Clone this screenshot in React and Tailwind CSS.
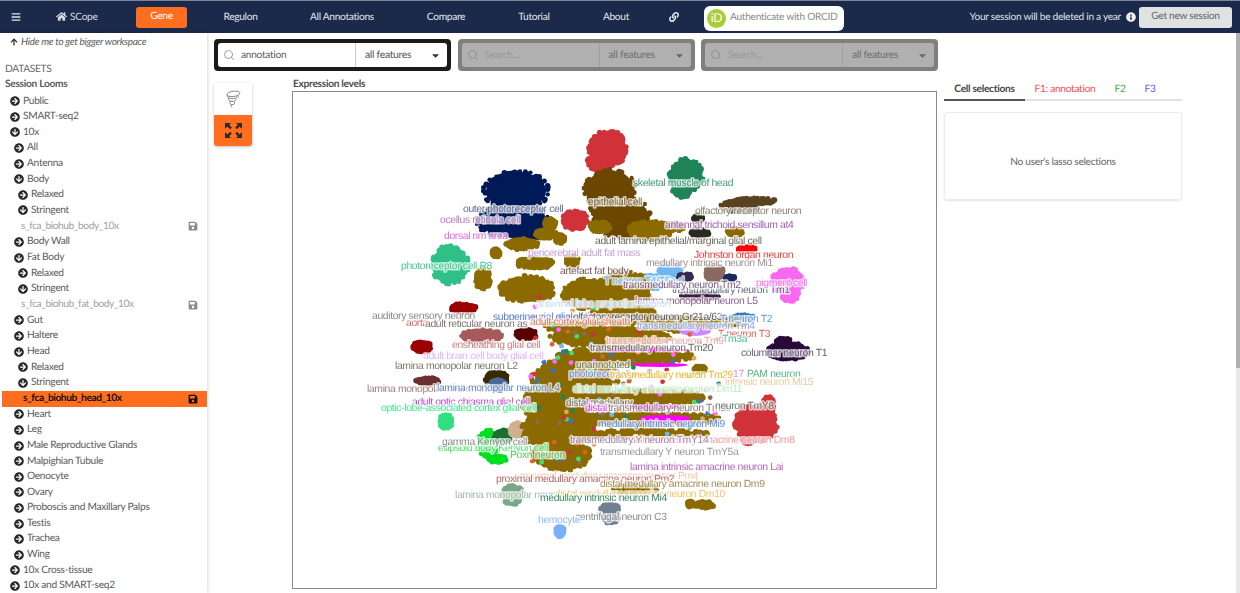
import React from 'react';
import { FaArrowCircleDown, FaArrowCircleRight, FaArrowUp, FaBars, FaCaretDown, FaHome, FaInfoCircle, FaLink, FaSave } from 'react-icons/fa';
import { Search } from 'lucide-react';

const NAV_ITEMS = [
  { label: 'Regulon', width: 'w-[107px]' },
  { label: 'All Annotations', width: 'w-[96px]' },
  { label: 'Compare', width: 'w-[112px]' },
  { label: 'Tutorial', width: 'w-[64px]' },
  { label: 'About', width: 'w-[100px]' },
];

// indent 0/1/2 maps to the tree levels, open = down arrow, file = loom row
const TREE = [
  { label: 'Public', level: 0 },
  { label: 'SMART-seq2', level: 0 },
  { label: '10x', level: 0, open: true },
  { label: 'All', level: 1 },
  { label: 'Antenna', level: 1 },
  { label: 'Body', level: 1, open: true },
  { label: 'Relaxed', level: 2 },
  { label: 'Stringent', level: 2, open: true },
  { label: 's_fca_biohub_body_10x', file: true },
  { label: 'Body Wall', level: 1 },
  { label: 'Fat Body', level: 1, open: true },
  { label: 'Relaxed', level: 2 },
  { label: 'Stringent', level: 2, open: true },
  { label: 's_fca_biohub_fat_body_10x', file: true },
  { label: 'Gut', level: 1 },
  { label: 'Haltere', level: 1 },
  { label: 'Head', level: 1, open: true },
  { label: 'Relaxed', level: 2 },
  { label: 'Stringent', level: 2, open: true },
  { label: 's_fca_biohub_head_10x', file: true, active: true },
  { label: 'Heart', level: 1 },
  { label: 'Leg', level: 1 },
  { label: 'Male Reproductive Glands', level: 1 },
  { label: 'Malpighian Tubule', level: 1 },
  { label: 'Oenocyte', level: 1 },
  { label: 'Ovary', level: 1 },
  { label: 'Proboscis and Maxillary Palps', level: 1 },
  { label: 'Testis', level: 1 },
  { label: 'Trachea', level: 1 },
  { label: 'Wing', level: 1 },
  { label: '10x Cross-tissue', level: 0 },
  { label: '10x and SMART-seq2', level: 0 },
];

const INDENT = ['pl-[10px]', 'pl-[14px]', 'pl-[18px]'];

// clusters: [cx, cy, rx, ry, colour], page coordinates
const OLIVE = '#8b6b00';
const BROWN = '#6b4700';
const CLUSTERS = [
  [608, 150, 18, 17, '#cf3339'], [600, 163, 12, 8, '#cf3339'],
  [516, 192, 30, 19, '#001a57'], [512, 222, 34, 15, '#001a57'], [530, 232, 12, 8, '#001a57'],
  [686, 176, 16, 15, '#1f8558'], [682, 190, 9, 8, '#1f8558'], [575, 221, 12, 9, '#cf3339'],
  [450, 266, 17, 18, '#2fc088'],
  [610, 190, 24, 18, BROWN], [622, 218, 26, 20, BROWN], [608, 205, 18, 18, BROWN],
  [650, 232, 20, 9, OLIVE], [670, 228, 14, 4, OLIVE], [600, 228, 10, 5, OLIVE],
  [740, 207, 18, 6, '#5a4320'], [755, 202, 20, 3, '#5a4320'], [700, 234, 9, 3, '#2b2b20'], [698, 219, 5, 3, '#2b2b20'],
  [735, 233, 8, 4, OLIVE], [747, 250, 9, 3, '#ff0000'],
  [788, 282, 15, 12, '#f968ef'], [790, 296, 8, 6, '#f968ef'],
  [714, 274, 9, 8, '#8a6a60'], [670, 272, 11, 9, '#6fb7f0'], [648, 283, 17, 7, '#6fb7f0'],
  [685, 278, 7, 3, '#3a2a50'], [730, 279, 5, 2, '#1a2a5a'], [700, 297, 18, 3, '#3a2040'],
  [742, 319, 12, 3, '#3b7ab8'], [730, 323, 15, 3, OLIVE],
  [788, 352, 20, 8, '#2a0a3a'], [784, 344, 7, 5, '#2a0a3a'],
  [756, 424, 20, 17, '#cf3339'], [768, 405, 6, 7, '#cf3339'], [748, 440, 6, 5, '#cf3339'],
  [463, 309, 12, 4, '#9a0000'], [422, 348, 9, 5, '#9a0000'],
  [482, 337, 19, 6, '#a65a5a'], [526, 335, 10, 5, '#5a0000'],
  [497, 380, 11, 7, '#3a2a00'], [428, 382, 11, 3, '#6a3030'],
  [498, 386, 8, 5, '#4a6a9a'], [446, 422, 6, 7, '#2fe080'], [488, 444, 9, 13, '#00e020'],
  [497, 460, 9, 3, '#00e020'], [503, 437, 8, 6, '#1a7030'], [517, 431, 7, 7, '#d0b090'],
  [513, 496, 10, 9, '#78a888'], [611, 517, 7, 7, '#708090'], [610, 509, 9, 4, '#708090'],
  [560, 532, 4, 5, '#7ab0ff'], [704, 506, 9, 3, OLIVE], [690, 505, 3, 3, OLIVE],
  [546, 235, 10, 4, OLIVE], [522, 245, 15, 5, OLIVE], [560, 240, 5, 4, OLIVE],
  [535, 264, 18, 5, OLIVE], [483, 280, 7, 10, OLIVE], [496, 254, 4, 4, OLIVE],
  [527, 290, 26, 12, OLIVE], [572, 262, 6, 6, OLIVE], [585, 295, 22, 14, OLIVE],
  [624, 292, 26, 18, OLIVE], [574, 326, 28, 8, OLIVE], [625, 315, 30, 10, OLIVE], [685, 325, 30, 7, OLIVE],
  [610, 338, 55, 10, OLIVE], [625, 357, 62, 8, OLIVE], [575, 378, 40, 18, OLIVE],
  [558, 402, 34, 22, OLIVE], [640, 398, 62, 7, OLIVE], [645, 420, 70, 6, OLIVE],
  [558, 430, 34, 20, OLIVE], [650, 435, 55, 4, OLIVE], [562, 456, 28, 14, OLIVE],
  [635, 490, 20, 4, OLIVE], [550, 225, 6, 5, OLIVE], [700, 370, 6, 3, OLIVE],
];

const STREAKS = [
  [640, 351, 50, 2, '#ff00ff'], [660, 366, 28, 2, '#ff00ff'], [652, 408, 28, 3, '#ff00ff'],
  [665, 420, 26, 4, '#ff00ff'], [695, 332, 16, 5, '#cc88ff'],
];

// scattered points from the minority clusters
const SPECKS = ['#3b6fd8', '#ff66ff', '#e06030', '#f0a060', '#8a6a50', '#3fe070', '#cf3339', '#6fb7f0', '#1f8558'];

function seeded(seed) {
  let s = seed;
  return () => {
    s = (s * 16807) % 2147483647;
    return s / 2147483647;
  };
}

function Cluster({ data, index }) {
  const [cx, cy, rx, ry, color] = data;
  const rnd = seeded(index * 97 + 11);
  const count = Math.max(10, Math.round((rx + ry) * 1.5));
  const dots = [];
  for (let i = 0; i < count; i++) {
    const a = (i / count) * Math.PI * 2;
    const k = 0.85 + rnd() * 0.25;
    dots.push(<circle key={i} cx={cx + Math.cos(a) * rx * k} cy={cy + Math.sin(a) * ry * k} r={2 + rnd()} />);
  }
  return (
    <g fill={color}>
      <ellipse cx={cx} cy={cy} rx={rx} ry={ry} />
      {dots}
    </g>
  );
}

function Specks() {
  const rnd = seeded(4242);
  const dots = [];
  for (let i = 0; i < 130; i++) {
    const left = i % 2 === 0;
    const x = left ? 530 + rnd() * 65 : 590 + rnd() * 130;
    const y = left ? 290 + rnd() * 175 : 325 + rnd() * 110;
    dots.push(<circle key={i} cx={x} cy={y} r={2.4} fill={SPECKS[Math.floor(rnd() * SPECKS.length)]} />);
  }
  return <g>{dots}</g>;
}

// [x, centre y, colour, text]
const LABELS = [
  [463, 210, '#5f6c98', 'outer photoreceptor cell'],
  [440, 221, '#b77dc2', 'ocellus retinula cell'],
  [444, 237, '#e466e4', 'dorsal rim area'],
  [401, 267, '#3fce92', 'photoreceptor cell R8'],
  [633, 184, '#3f9c78', 'skeletal muscle of head'],
  [588, 203, '#7a6638', 'epithelial cell'],
  [695, 212, '#8b8272', 'olfactory receptor neuron'],
  [665, 226, '#9d5db8', 'antennal trichoid sensillum at4'],
  [595, 242, '#6a6a62', 'adult lamina epithelial/marginal glial cell'],
  [694, 256, '#f53a3a', 'Johnston organ neuron'],
  [528, 254, '#c6a2d8', 'pericerebral adult fat mass'],
  [646, 264, '#a39292', 'medullary intrinsic neuron Mi1'],
  [560, 272, '#7c5656', 'artefact fat body'],
  [604, 282, '#70b8f4', 'T neuron T4/T5a-d'],
  [672, 291, '#666a80', 'transmedullary neuron Tm1'],
  [623, 286, '#7c5c84', 'transmedullary neuron Tm2'],
  [756, 284, '#fb6cf2', 'pigment cell'],
  [635, 302, '#8d5f8e', 'lamina monopolar neuron L5'],
  [536, 305, '#c4def8', 'antennal lobe projection neuron'],
  [372, 317, '#8a8a86', 'auditory sensory neuron'],
  [493, 318, '#5b7ad2', 'subperineurial glial cell'],
  [573, 318, '#5c5c64', 'olfactory receptor neuron Gr21a/63a'],
  [720, 320, '#5b9ed8', 'T neuron T2'],
  [406, 324, '#d96a6a', 'aorta'],
  [425, 325, '#7c7470', 'adult reticular neuron as'],
  [530, 323, '#ea7a66', 'adult cortex glial sheath'],
  [637, 327, '#8ca2f2', 'transmedullary neuron Tm4'],
  [718, 335, '#ea5a5a', 'T neuron T3'],
  [722, 340, '#4cc096', 'Tm3a'],
  [606, 342, '#f2a4a4', 'transmedullary neuron Tm9'],
  [590, 349, '#6c6c66', 'transmedullary neuron Tm20'],
  [741, 354, '#6b5c7c', 'columnar neuron T1'],
  [452, 346, '#c87e7e', 'ensheathing glial cell'],
  [423, 357, '#e2b4ff', 'adult brain cell body glial cell'],
  [395, 367, '#787868', 'lamina monopolar neuron L2'],
  [576, 366, '#7a7a5c', 'unannotated'],
  [569, 375, '#6c90ee', 'photoreceptor'],
  [610, 376, '#f2b428', 'transmedullary neuron Tm29'],
  [733, 375, '#c89ae0', '17'],
  [747, 375, '#5cb488', 'PAM neuron'],
  [725, 383, '#eccaa0', 'intrinsic neuron Mi15'],
  [573, 390, '#b8f0c0', 'distal medullary amacrine neuron Dm11'],
  [367, 390, '#a87c7c', 'lamina monopolar neuron L3'],
  [437, 389, '#6a8cc4', 'lamina monopolar neuron L4'],
  [412, 403, '#c448d4', 'adult optic chiasma glial cell'],
  [381, 409, '#40ea8c', 'optic-lobe-associated cortex glial cell'],
  [566, 404, '#787878', 'distal medullary'],
  [585, 409, '#f040f0', 'distal'],
  [608, 409, '#8a7878', 'transmedullary neuron Tm5c'],
  [715, 407, '#66786c', 'neuron TmY8'],
  [598, 425, '#5a8cf0', 'medullary intrinsic neuron Mi9'],
  [438, 449, '#40ea64', 'ellipsoid body Kenyon cell'],
  [442, 443, '#8a8a8a', 'gamma Kenyon cell'],
  [630, 441, '#f89c9c', 'distal medullary amacrine neuron Dm8'],
  [570, 441, '#a684b4', 'transmedullary Y neuron TmY14'],
  [510, 456, '#5cc45c', 'Poxn neuron'],
  [600, 453, '#9a9a9a', 'transmedullary Y neuron TmY5a'],
  [630, 468, '#ba64c4', 'lamina intrinsic amacrine neuron Lai'],
  [520, 477, '#eec8a8', 'proximal medullary amacrine neuron Pm4'],
  [496, 480, '#b86868', 'proximal medullary amacrine neuron Pm2'],
  [600, 485, '#a48c58', 'distal medullary amacrine neuron Dm9'],
  [455, 496, '#a0bca8', 'lamina monopolar neuron L1'],
  [555, 495, '#f2c468', 'distal medullary amacrine neuron Dm10'],
  [540, 499, '#3c8c64', 'medullary intrinsic neuron Mi4'],
  [575, 518, '#8a8e92', 'centrifugal neuron C3'],
  [538, 521, '#8cbaff', 'hemocyte'],
];

function LassoIcon() {
  return (
    <svg viewBox="0 0 16 18" fill="none" stroke="#666" strokeWidth="0.8" className="h-[18px] w-[16px]">
      <path d="M2 4.200C2.500 1.800 10 .4 13.500 1.500c2.400.8 1.200 3.300-2 4.400C8 7 3.500 7 2.300 5.400 1.900 4.900 1.900 4.500 2 4.200z" />
      <path d="M2.300 5.400c-.5 1.900 2.300 3.500 6 3.200 3-.3 5.300-1.700 5.400-2.800" />
      <path d="M3.600 8c-1 1.500.6 3 3.200 3.300 2.400.3 4.200-.7 4.500-2" />
      <path d="M5.500 11.100c-1.200 1.600-.6 3.400 1.200 3.700 1.900.3 3.100-.9 2.900-2.900" />
      <path d="M6.300 14.800c-.6.900-.2 2 .8 2.400" />
    </svg>
  );
}

// four separate corner arrows
function ExpandIcon() {
  return (
    <svg viewBox="0 0 17 15" fill="#2b2b2b" className="h-[15px] w-[17px]">
      <path d="M0 0h6L4.200 1.800 6.800 4.400 5 6.200 2.400 3.600.6 5.400 0 5z" />
      <path d="M17 0h-6l1.800 1.800-2.600 2.600L12 6.200l2.600-2.600 1.800 1.800.6-.4z" />
      <path d="M0 15h6l-1.800-1.800 2.600-2.600L5 8.800l-2.600 2.600L.6 9.600 0 10z" />
      <path d="M17 15h-6l1.800-1.800-2.600-2.600L12 8.800l2.600 2.600 1.800-1.800.6.400z" />
    </svg>
  );
}

function SearchBox({ value, dim }) {
  return (
    <div className={`flex h-[32px] w-[237px] rounded-[4px] p-[4px] ${dim ? 'bg-[#7f7f7f]' : 'bg-[#1b1b1b]'}`}>
      <div className={`flex w-[138px] items-center rounded-l-[3px] border-r pl-[5px] ${dim ? 'border-[#a0a0a0] bg-[#b0b0b0]' : 'border-[#ccc] bg-white'}`}>
        <Search className={`h-[12px] w-[12px] ${dim ? 'text-[#8a8a8a]' : 'text-[#888]'}`} strokeWidth={1.6} />
        <span className={`ml-[6px] pt-[2px] text-[10.2px] ${dim ? 'text-[#989898]' : 'text-[#5c5c5c]'}`}>{value || 'Search...'}</span>
      </div>
      <div className={`flex flex-1 items-center justify-between rounded-r-[3px] pl-[9px] pr-[6px] text-[10.4px] ${dim ? 'bg-[#b0b0b0] text-[#6f6f6f]' : 'bg-white text-[#555]'}`}>
        <span className="pt-[1px]">all features</span>
        <FaCaretDown className={`text-[11px] ${dim ? 'text-[#666]' : 'text-[#333]'}`} />
      </div>
    </div>
  );
}

function TreeRow({ item }) {
  if (item.file) {
    return (
      <div className={`flex h-[16px] items-center justify-between pl-[21px] pr-[9px] text-[10.2px] tracking-[-0.44px] ${item.active ? 'ml-[2px] bg-[#ff6d1f] pl-[19px] font-bold text-[#111]' : 'text-[#a0a0a0]'}`}>
        <span>{item.label}</span>
        <FaSave className={`text-[10px] ${item.active ? 'text-[#111]' : 'text-[#8a8a8a]'}`} />
      </div>
    );
  }
  const Icon = item.open ? FaArrowCircleDown : FaArrowCircleRight;
  return (
    <div className={`flex h-[15.6px] items-center gap-[3px] text-[10.2px] text-[#5a5a5a] ${INDENT[item.level]}`}>
      <Icon className="shrink-0 text-[10px] text-[#2a2a2a]" />
      <span>{item.label}</span>
    </div>
  );
}

export default function App() {
  return (
    <div className="flex h-[593px] flex-col overflow-hidden bg-white font-['Lato','Liberation_Sans',sans-serif] tracking-[-0.3px] [text-rendering:geometricPrecision]">
      <header className="flex h-[33px] shrink-0 items-center border-t border-[#7d8494] bg-[#1b2a4a] text-[10.2px] text-[#e4e6ea]">
        <FaBars className="ml-[11px] text-[10px] text-[#dfe2e8]" />
        <div className="ml-[35px] flex w-[53px] items-center gap-[3px] text-[#d8dbe2]">
          <FaHome className="text-[11px]" />
          <span className="pt-[1px]">SCope</span>
        </div>
        <div className="ml-[27px] flex h-[21px] w-[51px] items-center justify-center rounded-[3px] bg-[#ff6d1f] text-white">Gene</div>
        {NAV_ITEMS.map(item => (
          <div key={item.label} className={`flex justify-center whitespace-nowrap pt-[1px] ${item.width}`}>{item.label}</div>
        ))}
        <FaLink className="ml-[3px] text-[10px]" />
        <div className="ml-[25px] mt-[2px] flex h-[25px] w-[140px] items-center rounded-[6px] bg-white pl-[3px]">
          <span className="flex h-[19px] w-[19px] items-center justify-center rounded-full bg-[#a6ce39] text-[12px] leading-none text-white">iD</span>
          <span className="ml-[4px] whitespace-nowrap text-[10.2px] text-[#8a8a8a]">Authenticate with ORCID</span>
        </div>
        <span className="ml-auto whitespace-nowrap pt-[1px] text-[#dde0e6]">Your session will be deleted in a year</span>
        <FaInfoCircle className="ml-[5px] text-[10px] text-[#eee]" />
        <div className="ml-[3px] mr-[8px] flex h-[21px] w-[93px] items-center justify-center rounded-[3px] bg-[#e0e1e2] text-[#666]">Get new session</div>
      </header>

      <div className="flex min-h-0 flex-1">
        <aside className="relative z-10 h-full w-[207px] shrink-0 overflow-hidden bg-white shadow-[1px_0_3px_rgba(0,0,0,0.15)]">
          <div className="flex h-[18px] items-center gap-[3px] pl-[10px] text-[10px] italic text-[#5c5c5c]">
            <FaArrowUp className="text-[8px] not-italic text-[#333]" />
            <span>Hide me to get bigger workspace</span>
          </div>
          <div className="mt-[10px] pl-[5px] text-[10.2px] leading-[16px] text-[#666]">DATASETS</div>
          <div className="pl-[5px] text-[10.2px] font-bold leading-[15px] text-[#5a5a5a]">Session Looms</div>
          <div className="mt-[1.5px]">
            {TREE.map((item, i) => <TreeRow key={i} item={item} />)}
          </div>
        </aside>

        <main className="flex min-w-0 flex-1 bg-white">
          <div className="w-[737px] shrink-0 pl-[7px]">
            <div className="flex gap-[6.5px] pt-[6px]">
              <SearchBox value="annotation" />
              <SearchBox dim />
              <SearchBox dim />
            </div>
            <div className="mt-[7px] flex">
              <div className="mt-[5px] h-[63px] w-[38px] shrink-0 overflow-hidden rounded-[3px] shadow-[0_1px_3px_rgba(0,0,0,0.25)]">
                <div className="flex h-[32px] items-center justify-center bg-white"><LassoIcon /></div>
                <div className="flex h-[31px] items-center justify-center bg-[#ff6d1f]"><ExpandIcon /></div>
              </div>
              <div className="ml-[40px] flex-1">
                <div className="pl-[1px] text-[10.2px] font-bold leading-[13px] text-[#4a4a4a]">Expression levels</div>
                <div className="h-[498px] w-[645px] overflow-hidden border border-[#8a8a8a]">
                  <svg viewBox="293 93 643 496" className="block h-[496px] w-[643px] blur-[0.35px]">
                    {CLUSTERS.map((c, i) => <Cluster key={i} data={c} index={i + 1} />)}
                    {STREAKS.map((s, i) => <ellipse key={i} cx={s[0]} cy={s[1]} rx={s[2]} ry={s[3]} fill={s[4]} />)}
                    <Specks />
                    <g fontFamily="'Liberation Sans', Arial, sans-serif" fontSize="10.4" letterSpacing="-0.37" dominantBaseline="middle" strokeLinejoin="round" style={{ paintOrder: 'stroke' }}>
                      {LABELS.map((l, i) => (
                        <text key={i} x={l[0]} y={l[1]} fill={l[2]} stroke="#ffffff" strokeOpacity="0.7" strokeWidth="3">{l[3]}</text>
                      ))}
                    </g>
                  </svg>
                </div>
              </div>
            </div>
          </div>
          <div className="w-[238px] shrink-0 pt-[45px]">
            <div className="flex h-[23px] border-b-2 border-[#e3e3e3] pt-[2px] text-[10.2px]">
              <div className="-mb-[2px] flex w-[81px] items-center justify-center border-b-2 border-[#555] font-bold text-[#444]">Cell selections</div>
              <div className="flex w-[80px] items-center justify-center text-[#ff4a4f]">F1: annotation</div>
              <div className="flex w-[30px] items-center justify-center text-[#44aa44]">F2</div>
              <div className="flex w-[30px] items-center justify-center text-[#5a5aff]">F3</div>
            </div>
            <div className="mt-[11px] flex h-[88px] items-center justify-center rounded-[3px] border border-[#ececec] pt-[14px] text-[10.2px] text-[#666] shadow-[0_1px_2px_rgba(0,0,0,0.1)]">No user's lasso selections</div>
          </div>
          <div className="ml-auto h-full w-[4px] shrink-0 bg-[#e9e9e9]">
            <div className="h-[335px] bg-[#b0b0b0]" />
          </div>
        </main>
      </div>
    </div>
  );
}
